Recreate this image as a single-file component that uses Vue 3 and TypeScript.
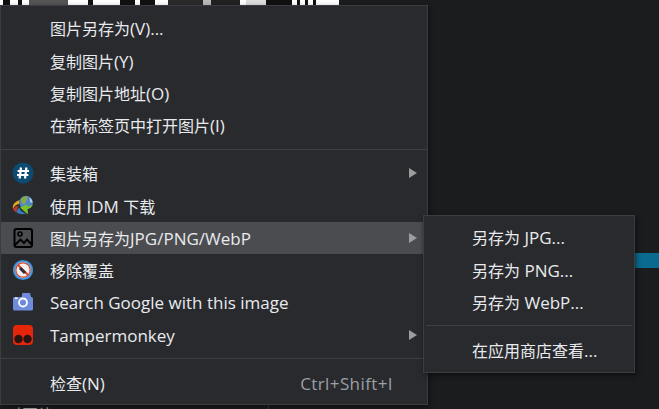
<template>
  <div class="stage">
    <!-- page behind the menu -->
    <div class="strip">
      <span
        v-for="(seg, i) in stripSegments"
        :key="i"
        :style="{ width: seg[0] + 'px', background: seg[1] }"
      ></span>
    </div>
    <div class="blue-bar"></div>
    <div class="page-text">对图片</div>
    <div class="page-rule"></div>

    <div class="menu main">
      <template v-for="(item, i) in mainItems" :key="i">
        <div v-if="item.sep" class="sep"></div>
        <div v-else class="item" :class="{ active: item.active }">
          <span class="icon">
            <svg v-if="item.icon === 'hash'" viewBox="0 0 22 22" width="22" height="22">
              <circle cx="11" cy="11" r="10.5" fill="#0e4b72" />
              <path d="M9 5.5 7.6 16.5M14.4 5.5 13 16.5M5.6 9h11.4M5 13h11.4" stroke="#fff" stroke-width="2.2" fill="none" />
            </svg>
            <svg v-else-if="item.icon === 'idm'" viewBox="0 0 22 22" width="22" height="22">
              <circle cx="14" cy="7.5" r="6.8" fill="#4d86c4" />
              <path d="M9 4C11 1.500 14 1 16 1.500 15 4 15 7 12 9.500 10 9 9 7 9 4Z" fill="#86a84c" />
              <path d="M17.500 2.500C19.500 3.500 20.500 5.500 20.500 8L18 7Z" fill="#b4cdea" />
              <path d="M7.500 5C3 6.500 0 10 1 13.500 2.500 11 4.500 9.500 7 9Z" fill="#e3a51f" />
              <path d="M1 13.500C1.500 15.500 3 17 5 17.500 4.500 15 5 13 7 11 4.500 11 2.500 12 1 13.500Z" fill="#c2352a" />
              <path d="M5 17.500C7.500 19.500 11 19.500 14 18.500 10.500 17.500 8 15.500 7 12.500 5.500 14 4.800 15.500 5 17.500Z" fill="#2f7fc0" />
              <path d="M21 9C20 12 18 13.500 15.500 14L16 19.500 8 12.500 15 9.500 15.500 11.500C17.500 11.500 19.500 10.500 21 9Z" fill="#7cc42a" />
            </svg>
            <svg v-else-if="item.icon === 'image'" viewBox="0 0 22 22" width="22" height="22">
              <rect x="2.500" y="2" width="17.500" height="18" rx="2" fill="none" stroke="#000" stroke-width="2" />
              <circle cx="8" cy="7" r="2" fill="none" stroke="#000" stroke-width="1.600" />
              <path d="M3 18 8.500 12.500 12 16 15 12.500 19.500 17.500" fill="none" stroke="#000" stroke-width="1.900" />
            </svg>
            <svg v-else-if="item.icon === 'block'" viewBox="0 0 22 22" width="22" height="22">
              <circle cx="11" cy="11" r="9" fill="#f4f0ee" stroke="#3d97e0" stroke-width="2.200" />
              <circle cx="11" cy="11" r="7.200" fill="none" stroke="#d8432f" stroke-width="1.300" />
              <path d="M6 6 16 16" stroke="#d8432f" stroke-width="2" />
              <path d="M8 9 13 14" stroke="#2c2d30" stroke-width="3" />
            </svg>
            <svg v-else-if="item.icon === 'camera'" viewBox="0 0 22 22" width="22" height="22">
              <path d="M1 6.500Q1 5 2.500 5H9.500L10.500 1H18L19 5H19.500Q21 5 21 6.500V17Q21 18.500 19.500 18.500H2.500Q1 18.500 1 17Z" fill="#6f8bdc" />
              <circle cx="11" cy="10.500" r="4" fill="none" stroke="#fff" stroke-width="1.800" />
              <rect x="3" y="5.500" width="2.500" height="1.500" fill="#fff" />
            </svg>
            <svg v-else-if="item.icon === 'tamper'" viewBox="0 0 22 22" width="22" height="22">
              <rect x="1" y="1" width="20" height="20" rx="4" fill="#e5260b" />
              <circle cx="6.500" cy="15" r="4.200" fill="#2a1412" />
              <circle cx="15.500" cy="15" r="4.200" fill="#2a1412" />
            </svg>
          </span>
          <span class="label">
            <span v-for="(run, r) in splitRuns(item.label)" :key="r" :class="{ latin: run.latin }">{{ run.text }}</span>
          </span>
          <span v-if="item.shortcut" class="shortcut">{{ item.shortcut }}</span>
          <span v-if="item.arrow" class="arrow"></span>
        </div>
      </template>
    </div>

    <div class="menu sub">
      <template v-for="(item, i) in subItems" :key="i">
        <div v-if="item.sep" class="sep"></div>
        <div v-else class="item">
          <span class="icon"></span>
          <span class="label">
            <span v-for="(run, r) in splitRuns(item.label)" :key="r" :class="{ latin: run.latin }">{{ run.text }}</span>
          </span>
        </div>
      </template>
    </div>
  </div>
</template>

<script setup lang="ts">
interface MenuItem {
  label?: string
  icon?: string
  shortcut?: string
  arrow?: boolean
  active?: boolean
  sep?: boolean
}

const mainItems: MenuItem[] = [
  { label: '图片另存为(V)...' },
  { label: '复制图片(Y)' },
  { label: '复制图片地址(O)' },
  { label: '在新标签页中打开图片(I)' },
  { sep: true },
  { label: '集装箱', icon: 'hash', arrow: true },
  { label: '使用 IDM 下载', icon: 'idm' },
  { label: '图片另存为JPG/PNG/WebP', icon: 'image', arrow: true, active: true },
  { label: '移除覆盖', icon: 'block' },
  { label: 'Search Google with this image', icon: 'camera' },
  { label: 'Tampermonkey', icon: 'tamper', arrow: true },
  { sep: true },
  { label: '检查(N)', shortcut: 'Ctrl+Shift+I' }
]

const subItems: MenuItem[] = [
  { label: '另存为 JPG...' },
  { label: '另存为 PNG...' },
  { label: '另存为 WebP...' },
  { sep: true },
  { label: '在应用商店查看...' }
]

// latin text runs a bit larger than the CJK text in this menu
const splitRuns = (label = '') =>
  (label.match(/[\u0000-\u00ff]+|[^\u0000-\u00ff]+/g) ?? []).map((text) => ({
    text,
    latin: text.charCodeAt(0) < 256
  }))

// black and white marks of the picture that sticks out above the menu
const stripSegments: [number, string][] = [
  [3, '#fff'], [7, '#111'], [8, '#fff'], [4, '#111'], [7, '#fff'], [39, '#555'], [20, '#fff'],
  [5, '#111'], [27, '#fff'], [15, '#111'], [5, '#fff'], [15, '#111'], [13, '#fff'], [35, '#2a2a2a'],
  [8, '#bbb'], [29, '#222'], [6, '#fff'], [20, '#ddd'], [26, '#111'], [5, '#fff'], [3, '#111'],
  [5, '#fff'], [3, '#111'], [5, '#fff'], [3, '#111'], [24, '#fff']
]
</script>

<style>
html,
body {
  background: #1b1c1e;
}
</style>

<style scoped>
.stage {
  position: relative;
  width: 659px;
  height: 409px;
  overflow: hidden;
  background: #1b1c1e;
  font-family: "Open Sans", "Noto Sans CJK SC", sans-serif;
}

.strip {
  display: flex;
  width: 339px;
  height: 6px;
  overflow: hidden;
  background: #fff;
}

.strip span {
  flex-shrink: 0;
  height: 100%;
}

.blue-bar {
  position: absolute;
  left: 620px;
  top: 253px;
  width: 39px;
  height: 15px;
  background: #0b6a8f;
}

.page-text {
  position: absolute;
  left: 6px;
  top: 405px;
  font-size: 16px;
  line-height: 20px;
  color: #a8a8a8;
}

.page-rule {
  position: absolute;
  left: 268px;
  top: 400px;
  width: 1px;
  height: 9px;
  background: #3a3b3d;
}

.menu {
  position: absolute;
  box-sizing: border-box;
  background: #292a2d;
  border: 1px solid #3c3d40;
  box-shadow: 1px 2px 5px rgba(0, 0, 0, 0.55);
  color: #e8eaed;
  font-size: 16px;
}

.main {
  left: 0;
  top: 5px;
  width: 428px;
  height: 400px;
  padding: 6px 0 5px;
}

.sub {
  left: 423px;
  top: 215px;
  width: 212px;
  height: 158px;
  padding: 5px 0 5px;
}

.item {
  display: flex;
  align-items: center;
  height: 32.4px;
  padding-right: 34px;
  white-space: nowrap;
}

.item.active {
  background: #4b4c4f;
}

.icon {
  display: flex;
  align-items: center;
  flex-shrink: 0;
  width: 49px;
  padding-left: 11px;
  box-sizing: border-box;
}

.sub .icon {
  width: 48px;
}

.label {
  flex: 1;
}

.latin {
  font-size: 17px;
}

.shortcut {
  font-size: 17px;
  letter-spacing: 0.4px;
  color: #9aa0a6;
}

.arrow {
  width: 0;
  height: 0;
  margin-right: -24px;
  border-left: 8px solid #9c9d9f;
  border-top: 5px solid transparent;
  border-bottom: 5px solid transparent;
}

.sep {
  height: 1px;
  background: #3f4043;
}

.main .sep {
  margin: 7px 0 7.5px;
}

.sub .sep {
  margin: 7px 2px 8px;
}
</style>
